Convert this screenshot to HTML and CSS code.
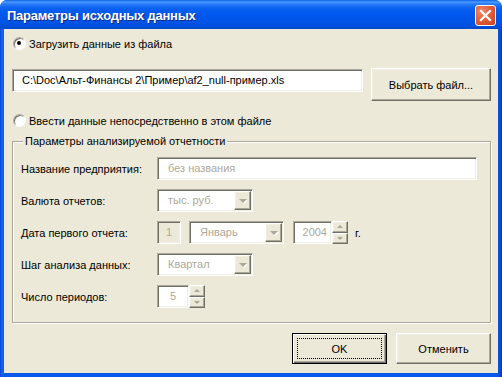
FILE: index.html
```html
<!DOCTYPE html>
<html lang="ru">
<head>
    <meta charset="UTF-8">
    <title>Параметры исходных данных</title>
    <link rel="stylesheet" href="styles.css">
</head>
<body>
    <div class="window">
        <div class="titlebar">
            <span class="title">Параметры исходных данных</span>
            <span class="close">
                <svg width="21" height="21" viewBox="0 0 21 21">
                    <path d="M6 6 L15 15 M15 6 L6 15" stroke="#fff" stroke-width="2.2" stroke-linecap="square"/>
                </svg>
            </span>
        </div>
        <div class="client">
            <div class="radio-row first">
                <span class="radio checked"></span>
                <span>Загрузить данные из файла</span>
            </div>
            <div class="file-row">
                <div class="sunken path">C:\Doc\Альт-Финансы 2\Пример\af2_null-пример.xls</div>
                <div class="btn browse">Выбрать файл...</div>
            </div>
            <div class="radio-row second">
                <span class="radio"></span>
                <span>Ввести данные непосредственно в этом файле</span>
            </div>

            <fieldset class="group">
                <legend>Параметры анализируемой отчетности</legend>
                <div class="field-row">
                    <span class="label">Название предприятия:</span>
                    <div class="sunken field name">без названия</div>
                </div>
                <div class="field-row">
                    <span class="label">Валюта отчетов:</span>
                    <div class="sunken combo wide">
                        <span class="combo-text">тыс. руб.</span>
                        <span class="drop"></span>
                    </div>
                </div>
                <div class="field-row">
                    <span class="label">Дата первого отчета:</span>
                    <div class="sunken field day">1</div>
                    <div class="sunken combo month">
                        <span class="combo-text">Январь</span>
                        <span class="drop"></span>
                    </div>
                    <div class="spin-box year-box">
                        <div class="sunken field year">2004</div>
                        <div class="spin">
                            <span class="spin-btn up"></span>
                            <span class="spin-btn down"></span>
                        </div>
                    </div>
                    <span class="suffix">г.</span>
                </div>
                <div class="field-row">
                    <span class="label">Шаг анализа данных:</span>
                    <div class="sunken combo wide">
                        <span class="combo-text">Квартал</span>
                        <span class="drop"></span>
                    </div>
                </div>
                <div class="field-row">
                    <span class="label">Число периодов:</span>
                    <div class="spin-box">
                        <div class="sunken field count">5</div>
                        <div class="spin">
                            <span class="spin-btn up"></span>
                            <span class="spin-btn down"></span>
                        </div>
                    </div>
                </div>
            </fieldset>

            <div class="buttons">
                <div class="btn default"><span class="focus">OK</span></div>
                <div class="btn">Отменить</div>
            </div>
        </div>
    </div>
</body>
</html>
```

FILE: styles.css
```css
body {
    margin: 0;
    background: #fff;
    font-family: "Liberation Sans", Arial, sans-serif;
    font-size: 11px;
    color: #000;
}
.window {
    width: 502px;
    height: 377px;
    display: flex;
    flex-direction: column;
    border-radius: 7px 7px 0 0;
    background: linear-gradient(to right, #0842d8 0, #166ae8 2px, #0858ea 4px, #0858ea 497px, #0a4ad8 500px, #0036b8 502px);
    overflow: hidden;
}
.titlebar {
    height: 29px;
    flex: none;
    display: flex;
    align-items: center;
    justify-content: space-between;
    padding: 0 6px 0 7px;
    background: linear-gradient(to bottom, #0a5fe8 0, #4a9bff 2px, #2a7bf8 4px, #0a62f0 8px, #0058ee 14px, #0054e6 22px, #004ed9 27px, #0044c8 29px);
    border-radius: 7px 7px 0 0;
}
.title {
    color: #fff;
    font-weight: bold;
    font-size: 13px;
    letter-spacing: -0.25px;
    text-shadow: 1px 1px 0 #0a2a84;
    margin-top: 1px;
}
.close {
    width: 21px;
    height: 21px;
    box-sizing: border-box;
    border: 1px solid #fff;
    border-radius: 3px;
    background: radial-gradient(circle at 30% 30%, #f08a6c 0, #e2603c 45%, #c8401c 100%);
    display: flex;
    align-items: center;
    justify-content: center;
    margin-top: 2px;
}
.close svg {
    margin: -1px;
}
.client {
    flex: 1;
    margin: 0 4px 4px 4px;
    background: #ece9d8;
    padding: 8px 7px 0 8px;
    display: flex;
    flex-direction: column;
}

/* radio buttons */
.radio-row {
    display: flex;
    align-items: center;
    height: 13px;
    white-space: nowrap;
}
.radio-row.second {
    margin-top: 13px;
}
.radio {
    width: 13px;
    height: 13px;
    box-sizing: border-box;
    border-radius: 50%;
    border: 1px solid;
    border-color: #aca899 #fff #fff #aca899;
    box-shadow: inset 1px 1px 0 #716f64;
    background: #fff;
    margin: 0 3px 0 1px;
    position: relative;
}
.radio.checked::after {
    content: "";
    position: absolute;
    left: 3px;
    top: 3px;
    width: 4px;
    height: 4px;
    border-radius: 50%;
    background: #000;
}

/* 3d borders */
.sunken {
    box-sizing: border-box;
    border: 1px solid;
    border-color: #aca899 #fff #fff #aca899;
    padding: 1px;
    box-shadow: inset 1px 1px 0 #716f64, inset -1px -1px 0 #f1efe2;
    background: #fff;
}
.btn {
    box-sizing: border-box;
    border: 1px solid;
    border-color: #fff #716f64 #716f64 #fff;
    box-shadow: inset -1px -1px 0 #aca899, inset 1px 1px 0 #f1efe2;
    background: #ece9d8;
    display: flex;
    align-items: center;
    justify-content: center;
    white-space: nowrap;
}

.file-row {
    display: flex;
    align-items: flex-start;
    gap: 8px;
    margin-top: 18px;
}
.path {
    width: 351px;
    height: 23px;
    margin-top: 1px;
    padding-left: 9px;
    line-height: 19px;
    white-space: nowrap;
    overflow: hidden;
}
.browse {
    width: 120px;
    height: 33px;
}

/* group box */
.group {
    margin: 7px 0 0 0;
    padding: 9px 0 14px 8px;
    border: 1px solid #aca899;
    box-shadow: 1px 1px 0 #fff, inset 1px 1px 0 #fff;
    min-width: 0;
}
.group legend {
    margin-left: 2px;
    padding: 0 2px;
    line-height: 14px;
    background: #ece9d8;
}
.field-row {
    display: flex;
    align-items: center;
    height: 23px;
    margin-bottom: 9px;
}
.field-row:last-child {
    margin-bottom: 0;
}
.label {
    width: 136px;
    flex: none;
}
.field {
    height: 23px;
    line-height: 19px;
    color: #aca899;
    white-space: nowrap;
}
.name {
    width: 320px;
    padding-left: 10px;
}
.day {
    width: 24px;
    text-align: center;
    background: #ece9d8;
    margin-right: 8px;
}
.year {
    width: 39px;
    text-align: right;
    padding-right: 4px;
}
.count {
    width: 32px;
    text-align: center;
}

.combo {
    height: 23px;
    display: flex;
    color: #aca899;
}
.combo.wide {
    width: 96px;
}
.combo.month {
    width: 95px;
    margin-right: 9px;
}
.combo-text {
    flex: 1;
    line-height: 19px;
    padding-left: 9px;
    white-space: nowrap;
}
.drop {
    width: 17px;
    box-sizing: border-box;
    border: 1px solid;
    border-color: #fff #716f64 #716f64 #fff;
    box-shadow: inset -1px -1px 0 #aca899, inset 1px 1px 0 #f1efe2;
    background: #ece9d8;
    display: flex;
    align-items: center;
    justify-content: center;
}
.drop::after {
    content: "";
    border-left: 4px solid transparent;
    border-right: 4px solid transparent;
    border-top: 4px solid #aca899;
    margin-top: 1px;
    filter: drop-shadow(1px 1px 0 #fff);
}

.spin-box {
    display: flex;
    height: 23px;
}
.spin {
    width: 16px;
    display: flex;
    flex-direction: column;
}
.spin-btn {
    flex: 1;
    box-sizing: border-box;
    border: 1px solid;
    border-color: #fff #716f64 #716f64 #fff;
    box-shadow: inset -1px -1px 0 #aca899, inset 1px 1px 0 #f1efe2;
    background: #ece9d8;
    display: flex;
    align-items: center;
    justify-content: center;
}
.spin-btn.up::after {
    content: "";
    border-left: 3px solid transparent;
    border-right: 3px solid transparent;
    border-bottom: 3px solid #aca899;
}
.spin-btn.down::after {
    content: "";
    border-left: 3px solid transparent;
    border-right: 3px solid transparent;
    border-top: 3px solid #aca899;
}
.suffix {
    margin-left: 7px;
}

/* bottom buttons */
.buttons {
    display: flex;
    justify-content: flex-end;
    gap: 9px;
    margin-top: 10px;
}
.buttons .btn {
    width: 95px;
    height: 31px;
}
.btn.default {
    border: 1px solid #000;
    box-shadow: inset 1px 1px 0 #fff, inset -1px -1px 0 #716f64, inset -2px -2px 0 #aca899;
    padding: 4px;
}
.focus {
    flex: 1;
    align-self: stretch;
    display: flex;
    align-items: center;
    justify-content: center;
    border: 1px dotted #000;
}
```
